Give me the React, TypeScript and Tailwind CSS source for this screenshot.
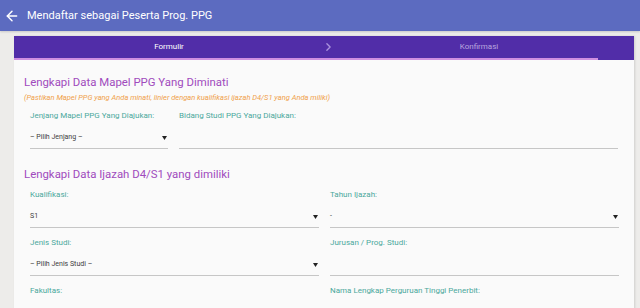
import { ArrowLeft, ChevronRight } from "lucide-react";

const Caret = () => (
  <svg width="5" height="4" viewBox="0 0 5 4" className="shrink-0">
    <path d="M0 0h5L2.5 4z" fill="#222" />
  </svg>
);

const SelectField = ({ label, value }: { label: string; value?: string }) => (
  <div className="flex flex-col">
    <span className="text-[8px] leading-[10px] text-[#4aa89c]">{label}</span>
    <div className="mt-[6px] flex h-[22px] items-center justify-between border-b border-[#c6c6c6] pr-[1px]">
      <span className="text-[7px] text-[#3c3c3c]">{value}</span>
      <Caret />
    </div>
  </div>
);

const InputField = ({ label }: { label: string }) => (
  <div className="flex flex-col">
    <span className="text-[8px] leading-[10px] text-[#4aa89c]">{label}</span>
    <div className="mt-[6px] h-[22px] border-b border-[#c6c6c6]" />
  </div>
);

export default function App() {
  return (
    <div className="h-[308px] w-[640px] overflow-hidden bg-[#edecea] font-['Roboto',sans-serif]">
      <header className="flex h-[31px] items-center gap-[7px] bg-[#5c6bc0] pl-[4px] text-white shadow-[0_1px_2px_rgba(0,0,0,0.15)]">
        <ArrowLeft size={16} strokeWidth={2.2} />
        <h1 className="text-[11px] leading-none">Mendaftar sebagai Peserta Prog. PPG</h1>
      </header>

      <main className="ml-[14px] mt-[5px] w-[620px] bg-[#fafafa] shadow-[1px_0_2px_rgba(0,0,0,0.12)]">
        <nav className="bg-[#512da8]">
          <div className="flex h-[22px] items-center text-[8px]">
            <div className="flex-1 text-center text-white">Formulir</div>
            <div className="relative flex-1 text-center text-[#b9a6df]">
              <ChevronRight
                size={13}
                strokeWidth={2.5}
                className="absolute left-[-2px] top-1/2 -translate-y-1/2 text-[#a991dc]"
              />
              Konfirmasi
            </div>
          </div>
          <div className="h-[2px] w-[584px] bg-[#cf8fe0]" />
        </nav>

        <section className="px-[10px] pt-[14px]">
          <h2 className="text-[11.4px] leading-[16px] text-[#a04bbd]">Lengkapi Data Mapel PPG Yang Diminati</h2>
          <p className="mt-[3px] text-[7.5px] leading-[10px] italic text-[#f0a14a]">
            (Pastikan Mapel PPG yang Anda minati, linier dengan kualifikasi ijazah D4/S1 yang Anda miliki)
          </p>
          <div className="mt-[8px] grid grid-cols-[138px_1fr] gap-x-[11px] px-[6px]">
            <SelectField label="Jenjang Mapel PPG Yang Diajukan:" value="– Pilih Jenjang –" />
            <InputField label="Bidang Studi PPG Yang Diajukan:" />
          </div>
        </section>

        <section className="px-[10px] pt-[17px]">
          <h2 className="text-[11.4px] leading-[16px] text-[#a04bbd]">Lengkapi Data Ijazah D4/S1 yang dimiliki</h2>
          <div className="mt-[8px] grid grid-cols-2 gap-x-[11px] gap-y-[10px] pl-[6px] pr-[5px]">
            <SelectField label="Kualifikasi:" value="S1" />
            <SelectField label="Tahun Ijazah:" value="-" />
            <SelectField label="Jenis Studi:" value="– Pilih Jenis Studi –" />
            <InputField label="Jurusan / Prog. Studi:" />
            <InputField label="Fakultas:" />
            <InputField label="Nama Lengkap Perguruan Tinggi Penerbit:" />
          </div>
        </section>
      </main>
    </div>
  );
}
